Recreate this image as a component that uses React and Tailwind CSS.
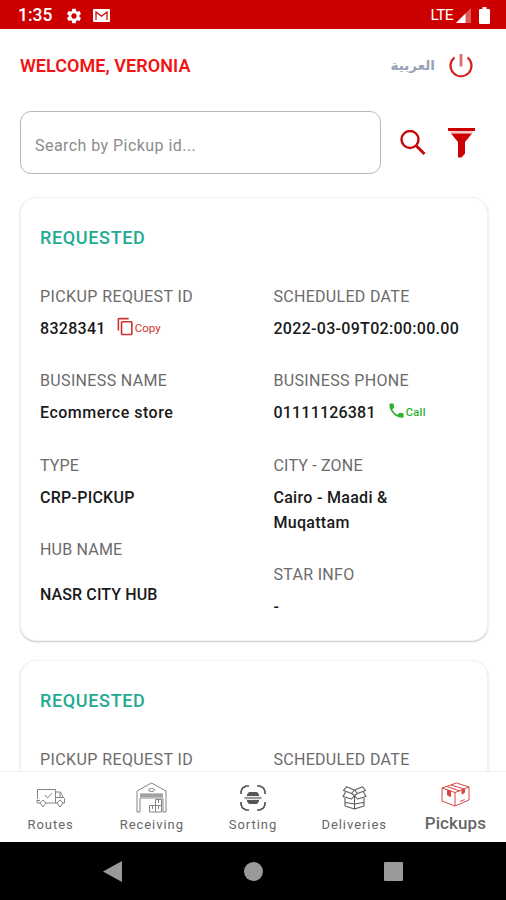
import { MdSettings, MdContentCopy, MdPhone } from 'react-icons/md';

const pickups = [
  {
    id: '8328341',
    status: 'REQUESTED',
    business: 'Ecommerce store',
    phone: '01111126381',
    scheduled: '2022-03-09T02:00:00.00',
    type: 'CRP-PICKUP',
    zone: 'Cairo - Maadi & Muqattam',
    hub: 'NASR CITY HUB',
    star: '-',
  },
  {
    id: '8328342',
    status: 'REQUESTED',
    business: 'Ecommerce store',
    phone: '01111126381',
    scheduled: '2022-03-09T02:00:00.00',
    type: 'CRP-PICKUP',
    zone: 'Cairo - Maadi & Muqattam',
    hub: 'NASR CITY HUB',
    star: '-',
  },
];

const StatusBar = () => (
  <div className="flex h-[29px] shrink-0 items-center bg-[#cc0000] pl-[18px] pr-[16px] pt-[2px] text-white">
    <span className="w-[35px] text-[17.5px] font-medium leading-none">1:35</span>
    <MdSettings className="ml-[12px] h-[18px] w-[18px]" />
    <svg className="ml-[10px] h-[13px] w-[17px]" viewBox="0 0 17 13">
      <rect width="17" height="13" rx="1" fill="#fff" />
      <path d="M3 11V3l5.500 4.200L14 3v8" fill="none" stroke="#cc0000" strokeWidth="1.2" />
    </svg>
    <span className="ml-auto text-[15.5px] leading-none tracking-[-0.6px]">LTE</span>
    <svg className="ml-[3px] h-[15px] w-[15px]" viewBox="0 0 15 15">
      <path d="M15 0v15H0z" fill="#fff" opacity="0.35" />
      <path d="M9.500 5.500V15H0z" fill="#fff" />
    </svg>
    <svg className="ml-[8px] h-[17px] w-[11px]" viewBox="0 0 11 17">
      <path d="M3.500 0h4v2H10a1 1 0 0 1 1 1v13a1 1 0 0 1-1 1H1a1 1 0 0 1-1-1V3a1 1 0 0 1 1-1h2.500z" fill="#fff" />
    </svg>
  </div>
);

const Header = () => (
  <header className="flex h-[74px] shrink-0 items-center pl-5 pr-[33px]">
    <h1 className="mt-[-1px] text-[18px] font-semibold tracking-[0.05px] text-[#f01414]">WELCOME, VERONIA</h1>
    <span
      dir="rtl"
      className="ml-auto font-['DejaVu_Sans',sans-serif] text-[13.5px] font-bold leading-none text-[#98a3b8]"
    >
      العربية
    </span>
    <svg className="ml-[14px] h-6 w-6" viewBox="0 0 24 24" fill="none" stroke="#d42020" strokeWidth="2.2">
      <path d="M5.500 3.500a10.500 10.500 0 1 0 13 0" />
      <path d="M12 0v12.500" stroke="#e06a6a" strokeWidth="2.800" />
    </svg>
  </header>
);

const SearchRow = () => (
  <div className="mt-[8px] flex shrink-0 items-center px-5">
    <div className="flex h-[63px] w-[361px] items-center rounded-[11px] border-[1.5px] border-[#b9b9b9] pl-[14px] pt-[6px]">
      <span className="text-[16px] tracking-[0.45px] text-[#8c8c8c]">Search by Pickup id...</span>
    </div>
    <svg className="ml-[19px] h-[26px] w-[26px]" viewBox="0 0 26 26" fill="none" stroke="#c60808">
      <circle cx="10" cy="9.500" r="8.500" strokeWidth="2.400" />
      <path d="M16 15.500l8.500 8.500" strokeWidth="3" />
    </svg>
    <svg className="ml-[22px] h-[30px] w-[27px]" viewBox="0 0 27 30" fill="#cc0000">
      <path d="M0 0h27v3H0z" />
      <path d="M1.500 3h24l-1 2.500h-22z" opacity="0.2" />
      <path d="M3 5.500h21L17 14v11.500L13.500 29.500H10V14z" />
    </svg>
  </div>
);

const Field = ({ label, value, tracking, valueTracking, gap = 'mt-[7px]', children }) => (
  <div className="mb-[27.4px] text-[16px] leading-[25px]">
    <div className={`text-[#6b6b6b] ${tracking}`}>{label}</div>
    <div className={`flex items-center font-medium text-[#1a1a1a] ${gap}`}>
      <span className={valueTracking}>{value}</span>
      {children}
    </div>
  </div>
);

const PickupCard = ({ pickup }) => (
  <article className="h-[444px] shrink-0 rounded-[16px] border border-[#f3f3f3] bg-white px-[19px] pt-[27px] shadow-[0_1px_2px_rgba(0,0,0,0.22)]">
    <h2 className="text-[18px] font-medium leading-[26px] tracking-[0.65px] text-[#22ab92]">
      {pickup.status}
    </h2>
    <div className="mt-[33px] flex">
      <div className="w-[234px]">
        <Field
          label="PICKUP REQUEST ID"
          value={pickup.id}
          tracking="tracking-[0.4px]"
          valueTracking="tracking-[0.3px]"
        >
          <span className="ml-[10px] flex items-center text-[11.5px] font-normal text-[#d03030]">
            <MdContentCopy className="mt-[-4px] h-[19px] w-[19px]" />
            Copy
          </span>
        </Field>
        <Field
          label="BUSINESS NAME"
          value={pickup.business}
          tracking="tracking-[0.35px]"
          valueTracking="tracking-[0.5px]"
        />
        <Field label="TYPE" value={pickup.type} tracking="tracking-[0.1px]" valueTracking="tracking-[0.25px]" />
        <Field
          label="HUB NAME"
          value={pickup.hub}
          tracking="tracking-[0.2px]"
          valueTracking="tracking-[0.1px]"
          gap="mt-[20px]"
        />
      </div>
      <div className="w-[195px]">
        <Field
          label="SCHEDULED DATE"
          value={pickup.scheduled}
          tracking="tracking-[0.3px]"
          valueTracking="tracking-[0.3px]"
        />
        <Field
          label="BUSINESS PHONE"
          value={pickup.phone}
          tracking="tracking-[0.35px]"
          valueTracking="tracking-[0.2px]"
        >
          <span className="ml-[11px] flex items-center text-[11px] tracking-[0.4px] text-[#2bb02f]">
            <MdPhone className="mt-[-5px] h-[19px] w-[19px]" />
            Call
          </span>
        </Field>
        <Field
          label="CITY - ZONE"
          value={pickup.zone}
          tracking="tracking-[0.2px]"
          valueTracking="w-[140px] tracking-[0.3px]"
        />
        <Field label="STAR INFO" value={pickup.star} tracking="tracking-[0.3px]" valueTracking="tracking-[0.2px]" />
      </div>
    </div>
  </article>
);

const TruckIcon = () => (
  <svg className="h-[20px] w-[30px]" viewBox="0 0 30 20" fill="none" stroke="#858585" strokeWidth="1">
    <path d="M1.500 11V1.500h18V15M19.500 4h5l2.500 5 1.500 1.500V15h-2M1 12v3h3M10 15h11M19.500 9.500h7.500M24 4v5.500M9 7l2.500 3L16 5M1 12.500h3" />
    <path d="M4 15l3-3 3 3-3 4zM21 15l3-3 3 3-3 4z" />
  </svg>
);

const WarehouseIcon = () => (
  <svg className="h-[31px] w-[31px]" viewBox="0 0 31 31" fill="none" stroke="#858585" strokeWidth="1">
    <path d="M1 30V9L15.500 1 30 9v21h-3V16H4v14zM4 12h23" />
    <path d="M4 13.500h23" stroke="#a0a0a0" strokeWidth="3" />
    <ellipse cx="15.500" cy="8" rx="3" ry="1.500" />
    <path d="M13.500 23.500h12V30h-12zM19.500 17.500h6v6h-6zM19.500 23.500V30M16.500 24v3M22.500 24v3M22.500 18v3" />
  </svg>
);

const ScanIcon = () => (
  <svg className="h-[26px] w-[26px]" viewBox="0 0 26 26" fill="none" stroke="#4d4d4d" strokeWidth="1.600">
    <path d="M1 9V6.500L2.500 3 6 1h3M17 1h3l3.500 2L25 6.500V9M25 17v2.500L23.500 23 20 25h-3M9 25H6l-3.500-2L1 19.500V17" />
    <path d="M7 11V9.500L9 7h8l2 2.500V11zM7 15v1.500L9 19h8l2-2.500V15z" fill="#555" stroke="none" />
    <path d="M4.500 13h17" stroke="#999" strokeWidth="2.400" />
  </svg>
);

const OpenBoxIcon = () => (
  <svg className="h-[24px] w-[25px]" viewBox="0 0 25 24" fill="none" stroke="#5c5c5c" strokeWidth="1.100" strokeLinejoin="round">
    <path d="M12.500 4 4.500.800 1.500 4.500 9.500 7.500zM12.500 4l8-3.200 3 3.700-8 3z" />
    <path d="M3.500 6 1 10.500l8.500 2.500 3-3.500 3 3.500 8.500-2.500L21.500 6M9.500 7.500l3 2 3-2M3 12v8l9.500 3 9.500-3v-8M12.500 9.500V23M3.500 16.500l9 1.500 9-1.500" />
  </svg>
);

const BoxIcon = () => (
  <svg className="h-[25px] w-[29px]" viewBox="0 0 29 25" fill="none" stroke="#d64545" strokeWidth="1">
    <path d="M1 6 15.500 1 28 5v13l-14 6L1 19zM1 6l13 4.500L28 5M14 10.500V24M6 4.500 19 9M10 3l13 4M19 19.500l4.500-2" />
    <path d="M6.500 8v5l3 1.500V9zM21 8v4l2.500-1.500V7z" fill="#d64545" />
  </svg>
);

const tabs = [
  { label: 'Routes', icon: TruckIcon },
  { label: 'Receiving', icon: WarehouseIcon },
  { label: 'Sorting', icon: ScanIcon },
  { label: 'Deliveries', icon: OpenBoxIcon },
  { label: 'Pickups', icon: BoxIcon, active: true },
];

const TabBar = () => (
  <nav className="flex h-[71px] shrink-0 border-t border-[#f0f0f0] bg-white">
    {tabs.map(({ label, icon: Icon, active }) => (
      <div key={label} className="flex flex-1 flex-col items-center">
        <div className={`flex items-center justify-center ${active ? 'h-[45px]' : 'h-[51px]'}`}>
          <Icon />
        </div>
        <span
          className={`whitespace-nowrap leading-none text-[#666] ${
            active ? 'mt-[-2px] text-[17px] font-medium tracking-[0.1px]' : 'mt-[-5px] text-[13px] tracking-[0.95px]'
          }`}
        >
          {label}
        </span>
      </div>
    ))}
  </nav>
);

const SystemBar = () => (
  <div className="flex h-[58px] shrink-0 items-center justify-between bg-black px-[103px] text-[#999]">
    <svg className="h-[21px] w-[19px]" viewBox="0 0 19 21" fill="currentColor">
      <path d="M19 0v21L0 10.500z" />
    </svg>
    <div className="h-[19px] w-[19px] rounded-full bg-[#999]" />
    <div className="h-[19px] w-[19px] rounded-[1px] bg-[#999]" />
  </div>
);

const App = () => (
  <div className="flex h-[900px] w-[506px] flex-col overflow-hidden bg-white font-[Roboto,sans-serif]">
    <StatusBar />
    <Header />
    <SearchRow />
    <main className="flex min-h-0 flex-1 flex-col gap-[19px] overflow-hidden pl-5 pr-[18px] pt-[23px]">
      {pickups.map((pickup) => (
        <PickupCard key={pickup.id} pickup={pickup} />
      ))}
    </main>
    <TabBar />
    <SystemBar />
  </div>
);

export default App;
